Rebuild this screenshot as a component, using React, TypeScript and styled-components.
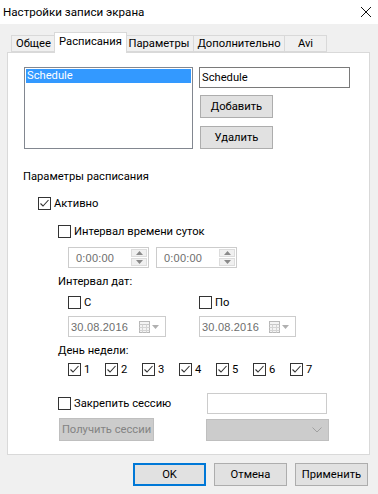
import React from "react";
import styled, { createGlobalStyle } from "styled-components";

const Global = createGlobalStyle`
  html, body { margin: 0; padding: 0; background: #f0f0f0; }
  body { font-family: Roboto, "Noto Sans", sans-serif; font-size: 11.2px; color: #000; }
  * { box-sizing: border-box; }
`;

const Win = styled.div`
  width: 378px;
  height: 494px;
  display: flex;
  flex-direction: column;
  background: #f0f0f0;
  overflow: hidden;
`;

const TitleBar = styled.div`
  height: 24px;
  background: #fff;
  display: flex;
  align-items: center;
  justify-content: space-between;
  padding: 0 7px 0 3px;
`;

const Title = styled.span`
  font-size: 11.6px;
`;

const Body = styled.div`
  display: flex;
  flex-direction: column;
  padding: 8px 8px 0 7px;
`;

const TabStrip = styled.div`
  display: flex;
  align-items: flex-end;
  height: 20px;
  padding-left: 4px;
  position: relative;
  z-index: 2;
`;

const Tab = styled.div<{ $w: number; $active?: boolean; $first?: boolean }>`
  width: ${(p) => p.$w}px;
  height: ${(p) => (p.$active ? 21 : 17)}px;
  margin: 0 ${(p) => (p.$active ? -2 : 0)}px ${(p) => (p.$active ? -1 : 0)}px;
  border: 1px solid #d9d9d9;
  border-bottom: ${(p) => (p.$active ? "none" : "1px solid #d9d9d9")};
  border-left-width: ${(p) => (p.$first || p.$active ? 1 : 0)}px;
  background: ${(p) => (p.$active ? "#fff" : "#f0f0f0")};
  display: flex;
  align-items: center;
  justify-content: center;
  padding-bottom: ${(p) => (p.$active ? 3 : 0)}px;
  position: relative;
  z-index: ${(p) => (p.$active ? 2 : 1)};
  white-space: nowrap;
`;

const Panel = styled.div`
  width: 363px;
  height: 403px;
  border: 1px solid #d9d9d9;
  background: #fff;
  display: flex;
  flex-direction: column;
  position: relative;
  z-index: 1;
`;

const TopSection = styled.div`
  display: flex;
  gap: 6px;
  margin-top: 14px;
  padding-left: 16px;
`;

const ListBox = styled.div`
  width: 169px;
  height: 82px;
  border: 1px solid #828790;
  padding: 1px;
  background: #fff;
`;

const ListItem = styled.div<{ $sel?: boolean }>`
  height: 14px;
  line-height: 14px;
  padding-left: 1px;
  background: ${(p) => (p.$sel ? "#3399ff" : "transparent")};
  color: ${(p) => (p.$sel ? "#fff" : "#000")};
`;

const SideCol = styled.div`
  display: flex;
  flex-direction: column;
  align-items: flex-start;
`;

const TextInput = styled.div<{ $w: number; $h: number; $disabled?: boolean }>`
  width: ${(p) => p.$w}px;
  height: ${(p) => p.$h}px;
  border: 1px solid ${(p) => (p.$disabled ? "#cccccc" : "#7a7a7a")};
  background: #fff;
  display: flex;
  align-items: center;
  padding-left: 2px;
`;

const Button = styled.div<{ $w: number; $mt?: number; $ml?: number; $primary?: boolean; $disabled?: boolean }>`
  width: ${(p) => p.$w}px;
  height: 23px;
  margin-top: ${(p) => p.$mt ?? 0}px;
  margin-left: ${(p) => p.$ml ?? 0}px;
  background: ${(p) => (p.$disabled ? "#cccccc" : "#e1e1e1")};
  border: ${(p) => (p.$primary ? "2px solid #0078d7" : p.$disabled ? "1px solid #bfbfbf" : "1px solid #adadad")};
  color: ${(p) => (p.$disabled ? "#838383" : "#000")};
  display: flex;
  align-items: center;
  justify-content: center;
  white-space: nowrap;
`;

const Row = styled.div<{ $mt: number; $pl: number; $h?: number }>`
  display: flex;
  align-items: center;
  margin-top: ${(p) => p.$mt}px;
  padding-left: ${(p) => p.$pl}px;
  height: ${(p) => p.$h ?? 16}px;
`;

const Cell = styled.div<{ $w?: number }>`
  display: flex;
  align-items: center;
  ${(p) => (p.$w ? `width: ${p.$w}px; flex: none;` : "")}
`;

const Label = styled.span`
  white-space: nowrap;
`;

const CheckWrap = styled.label`
  display: flex;
  align-items: center;
  gap: 3px;
  white-space: nowrap;
`;

const Box = styled.span`
  width: 13px;
  height: 13px;
  border: 1px solid #333;
  background: #fff;
  display: flex;
  align-items: center;
  justify-content: center;
  flex: none;
`;

const Field = styled.div<{ $w: number; $ml?: number }>`
  width: ${(p) => p.$w}px;
  height: 21px;
  margin-left: ${(p) => p.$ml ?? 0}px;
  border: 1px solid #cccccc;
  background: #fff;
  display: flex;
  align-items: center;
  justify-content: space-between;
  padding: 0 1px 0 2px;
`;

const FieldText = styled.span<{ $pl?: number }>`
  font-family: "Liberation Sans", Arial, sans-serif;
  font-size: 11px;
  color: #6d6d6d;
  padding-left: ${(p) => p.$pl ?? 0}px;
  letter-spacing: 0.2px;
`;

const Spin = styled.div`
  width: 16px;
  height: 17px;
  display: flex;
  flex-direction: column;
  gap: 1px;
`;

const SpinBtn = styled.div`
  flex: 1;
  background: #f0f0f0;
  border: 1px solid #dcdcdc;
  display: flex;
  align-items: center;
  justify-content: center;
`;

const Combo = styled.div`
  width: 123px;
  height: 22px;
  background: #cccccc;
  border: 1px solid #bfbfbf;
  display: flex;
  align-items: center;
  justify-content: flex-end;
  padding-right: 6px;
`;

const Footer = styled.div`
  display: flex;
  justify-content: flex-end;
  gap: 8px;
  margin-top: 8px;
  padding-right: 2px;
`;

const Check = ({ on, children }: { on?: boolean; children?: React.ReactNode }) => (
  <CheckWrap>
    <Box>
      {on && (
        <svg width="11" height="11" viewBox="0 0 11 11">
          <polyline points="1.5,5.5 4,8 9.5,2" fill="none" stroke="#333" strokeWidth="1.1" />
        </svg>
      )}
    </Box>
    {children}
  </CheckWrap>
);

const TimeField = ({ ml }: { ml?: number }) => (
  <Field $w={81} $ml={ml}>
    <FieldText $pl={5}>0:00:00</FieldText>
    <Spin>
      <SpinBtn>
        <svg width="7" height="4" viewBox="0 0 7 4"><polygon points="0,4 3.5,0 7,4" fill="#8a8a8a" /></svg>
      </SpinBtn>
      <SpinBtn>
        <svg width="7" height="4" viewBox="0 0 7 4"><polygon points="0,0 3.5,4 7,0" fill="#8a8a8a" /></svg>
      </SpinBtn>
    </Spin>
  </Field>
);

const DateField = ({ w }: { w: number }) => (
  <Field $w={w}>
    <FieldText>30.08.2016</FieldText>
    <svg width="26" height="14" viewBox="0 0 26 14">
      <rect x="1.5" y="1.5" width="10" height="11" fill="#f4f4f4" stroke="#b8b8b8" />
      <line x1="1.5" y1="4.5" x2="11.5" y2="4.5" stroke="#c8c8c8" />
      <line x1="1.5" y1="7.5" x2="11.5" y2="7.5" stroke="#d4d4d4" />
      <line x1="1.5" y1="10.5" x2="11.5" y2="10.5" stroke="#d4d4d4" />
      <line x1="4.5" y1="4.5" x2="4.5" y2="12.5" stroke="#d4d4d4" />
      <line x1="8.5" y1="4.5" x2="8.5" y2="12.5" stroke="#d4d4d4" />
      <polygon points="14,5 21,5 17.5,9" fill="#b0b0b0" />
    </svg>
  </Field>
);

export default function App() {
  return (
    <Win>
      <Global />
      <TitleBar>
        <Title>Настройки записи экрана</Title>
        <svg width="10" height="10" viewBox="0 0 10 10">
          <line x1="0" y1="0" x2="10" y2="10" stroke="#111" strokeWidth="1" />
          <line x1="10" y1="0" x2="0" y2="10" stroke="#111" strokeWidth="1" />
        </svg>
      </TitleBar>
      <Body>
        <TabStrip>
          <Tab $w={45} $first>Общее</Tab>
          <Tab $w={73} $active>Расписания</Tab>
          <Tab $w={69}>Параметры</Tab>
          <Tab $w={91}>Дополнительно</Tab>
          <Tab $w={42}>Avi</Tab>
        </TabStrip>
        <Panel>
          <TopSection>
            <ListBox>
              <ListItem $sel>Schedule</ListItem>
            </ListBox>
            <SideCol>
              <TextInput $w={151} $h={21}>Schedule</TextInput>
              <Button $w={73} $mt={7} $ml={1}>Добавить</Button>
              <Button $w={73} $mt={8} $ml={1}>Удалить</Button>
            </SideCol>
          </TopSection>

          <Row $mt={19} $pl={15}>
            <Label>Параметры расписания</Label>
          </Row>
          <Row $mt={11} $pl={30}>
            <Check on>Активно</Check>
          </Row>
          <Row $mt={12} $pl={50}>
            <Check>Интервал времени суток</Check>
          </Row>
          <Row $mt={8} $pl={60} $h={21}>
            <TimeField />
            <TimeField ml={7} />
          </Row>
          <Row $mt={5} $pl={50}>
            <Label>Интервал дат:</Label>
          </Row>
          <Row $mt={5} $pl={60}>
            <Cell $w={131}><Check>С</Check></Cell>
            <Cell><Check>По</Check></Cell>
          </Row>
          <Row $mt={6} $pl={60} $h={21}>
            <Cell $w={131}><DateField w={98} /></Cell>
            <Cell><DateField w={97} /></Cell>
          </Row>
          <Row $mt={5} $pl={50}>
            <Label>День недели:</Label>
          </Row>
          <Row $mt={3} $pl={60}>
            {["1", "2", "3", "4", "5", "6", "7"].map((d) => (
              <Cell key={d} $w={37}><Check on>{d}</Check></Cell>
            ))}
          </Row>
          <Row $mt={16} $pl={50} $h={21}>
            <Cell $w={149}><Check>Закрепить сессию</Check></Cell>
            <TextInput $w={120} $h={21} $disabled />
          </Row>
          <Row $mt={4} $pl={51} $h={23}>
            <Cell $w={147}>
              <Button $w={95} $disabled>Получить сессии</Button>
            </Cell>
            <Combo>
              <svg width="10" height="6" viewBox="0 0 10 6">
                <polyline points="0.5,0.5 5,5 9.5,0.5" fill="none" stroke="#a0a0a0" strokeWidth="1" />
              </svg>
            </Combo>
          </Row>
        </Panel>
        <Footer>
          <Button $w={73} $primary>OK</Button>
          <Button $w={73}>Отмена</Button>
          <Button $w={73}>Применить</Button>
        </Footer>
      </Body>
    </Win>
  );
}
